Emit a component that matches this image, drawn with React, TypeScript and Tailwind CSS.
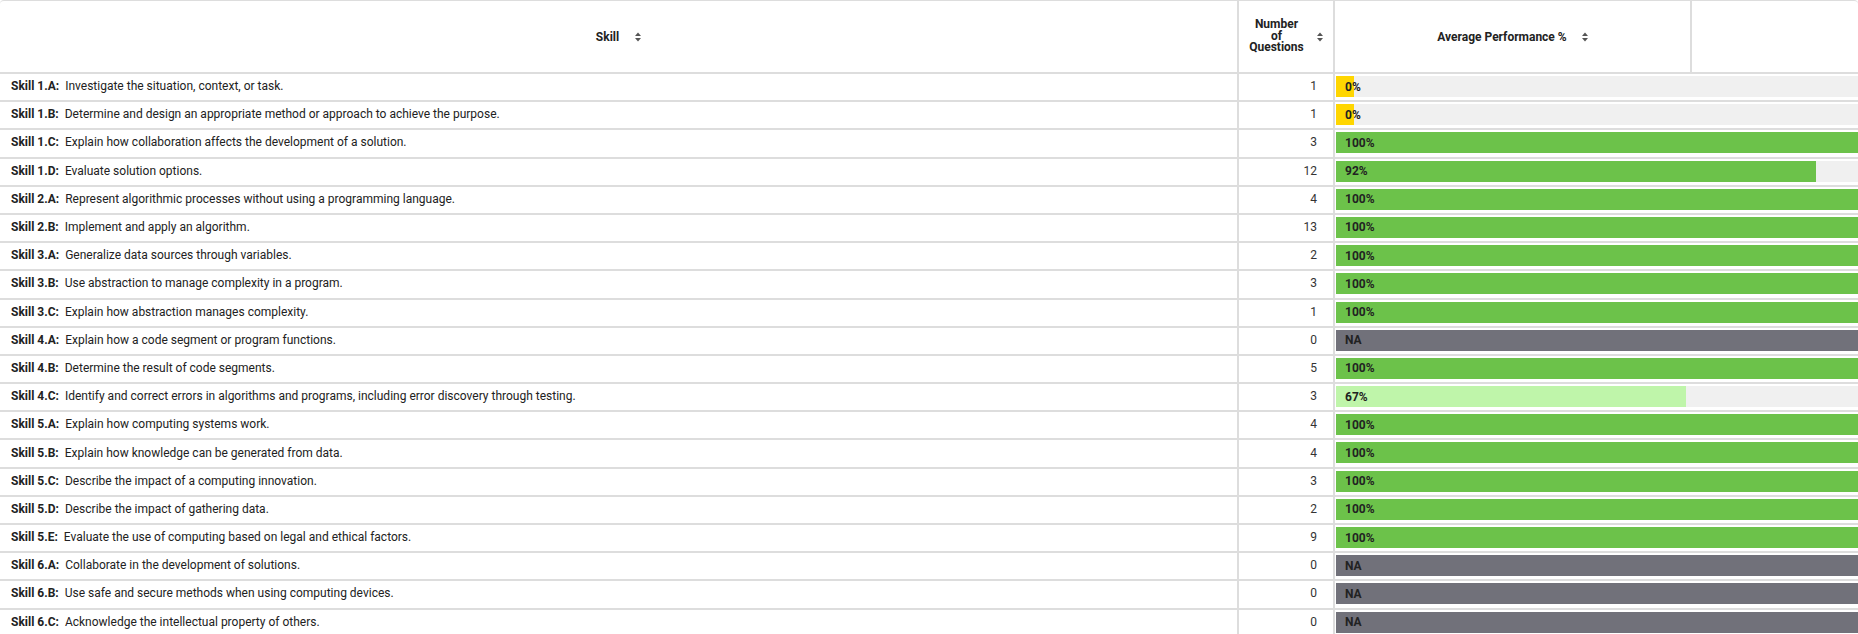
import React from "react";

type Row = { id: string; text: string; count: number; pct: number | null };

const rows: Row[] = [
  { id: "1.A", text: "Investigate the situation, context, or task.", count: 1, pct: 0 },
  { id: "1.B", text: "Determine and design an appropriate method or approach to achieve the purpose.", count: 1, pct: 0 },
  { id: "1.C", text: "Explain how collaboration affects the development of a solution.", count: 3, pct: 100 },
  { id: "1.D", text: "Evaluate solution options.", count: 12, pct: 92 },
  { id: "2.A", text: "Represent algorithmic processes without using a programming language.", count: 4, pct: 100 },
  { id: "2.B", text: "Implement and apply an algorithm.", count: 13, pct: 100 },
  { id: "3.A", text: "Generalize data sources through variables.", count: 2, pct: 100 },
  { id: "3.B", text: "Use abstraction to manage complexity in a program.", count: 3, pct: 100 },
  { id: "3.C", text: "Explain how abstraction manages complexity.", count: 1, pct: 100 },
  { id: "4.A", text: "Explain how a code segment or program functions.", count: 0, pct: null },
  { id: "4.B", text: "Determine the result of code segments.", count: 5, pct: 100 },
  { id: "4.C", text: "Identify and correct errors in algorithms and programs, including error discovery through testing.", count: 3, pct: 67 },
  { id: "5.A", text: "Explain how computing systems work.", count: 4, pct: 100 },
  { id: "5.B", text: "Explain how knowledge can be generated from data.", count: 4, pct: 100 },
  { id: "5.C", text: "Describe the impact of a computing innovation.", count: 3, pct: 100 },
  { id: "5.D", text: "Describe the impact of gathering data.", count: 2, pct: 100 },
  { id: "5.E", text: "Evaluate the use of computing based on legal and ethical factors.", count: 9, pct: 100 },
  { id: "6.A", text: "Collaborate in the development of solutions.", count: 0, pct: null },
  { id: "6.B", text: "Use safe and secure methods when using computing devices.", count: 0, pct: null },
  { id: "6.C", text: "Acknowledge the intellectual property of others.", count: 0, pct: null },
];

function SortIcon() {
  return (
    <svg width="6" height="10" viewBox="0 0 6 10" className="shrink-0">
      <polygon points="0,4 3,0.5 6,4" fill="#555" />
      <polygon points="0,6 3,9.5 6,6" fill="#555" />
    </svg>
  );
}

// pct -> fill colour (yellow for nothing, light green for middling, green for high)
function barColor(pct: number) {
  if (pct < 50) return "bg-[#ffd600]";
  if (pct < 80) return "bg-[#bff5aa]";
  return "bg-[#6cc24a]";
}

function Bar({ pct }: { pct: number | null }) {
  if (pct === null) {
    return (
      <div className="flex h-[21px] items-center bg-[#71717a] pl-[9px] text-[12px] font-bold text-[#222]">
        NA
      </div>
    );
  }
  return (
    <div className="relative flex h-[21px] items-center bg-[#f0f0f0] pl-[9px] text-[12px] font-bold text-[#222]">
      <div
        className={`absolute left-0 top-0 h-full min-w-[18px] ${barColor(pct)}`}
        style={{ width: `${pct}%` }}
      />
      <span className="relative">{pct}%</span>
    </div>
  );
}

export default function App() {
  return (
    <div className="min-h-screen bg-white font-['Roboto',sans-serif] text-[#222]">
      {/* header */}
      <div className="flex h-[74px] rounded-t-[4px] border-t border-b-2 border-[#dddddd] text-[12px] font-bold">
        <div className="flex w-[1239px] shrink-0 items-center justify-center gap-[16px] border-r-2 border-[#dddddd]">
          <span>Skill</span>
          <SortIcon />
        </div>
        <div className="flex w-[96px] shrink-0 items-center justify-center gap-[13px] border-r-2 border-[#dddddd]">
          <span className="text-center leading-[11.5px]">
            Number
            <br />
            of
            <br />
            Questions
          </span>
          <SortIcon />
        </div>
        <div className="flex w-[357px] shrink-0 items-center justify-center gap-[15px] border-r-2 border-[#dddddd]">
          <span>Average Performance %</span>
          <SortIcon />
        </div>
        <div className="flex-1" />
      </div>

      {/* body */}
      {rows.map((r) => (
        <div key={r.id} className="flex h-[28.2px] border-b-2 border-[#dddddd] text-[12px]">
          <div className="flex w-[1239px] shrink-0 items-center border-r-2 border-[#dddddd] pb-[2px] pl-[11px]">
            <span className="font-bold">Skill {r.id}:</span>
            <span className="ml-[6px]"> {r.text}</span>
          </div>
          <div className="flex w-[96px] shrink-0 items-center justify-end border-r-2 border-[#dddddd] pb-[2px] pr-[16px] text-[#333]">
            {r.count}
          </div>
          <div className="flex-1 pl-[1px] pt-[2px]">
            <Bar pct={r.pct} />
          </div>
        </div>
      ))}
    </div>
  );
}
